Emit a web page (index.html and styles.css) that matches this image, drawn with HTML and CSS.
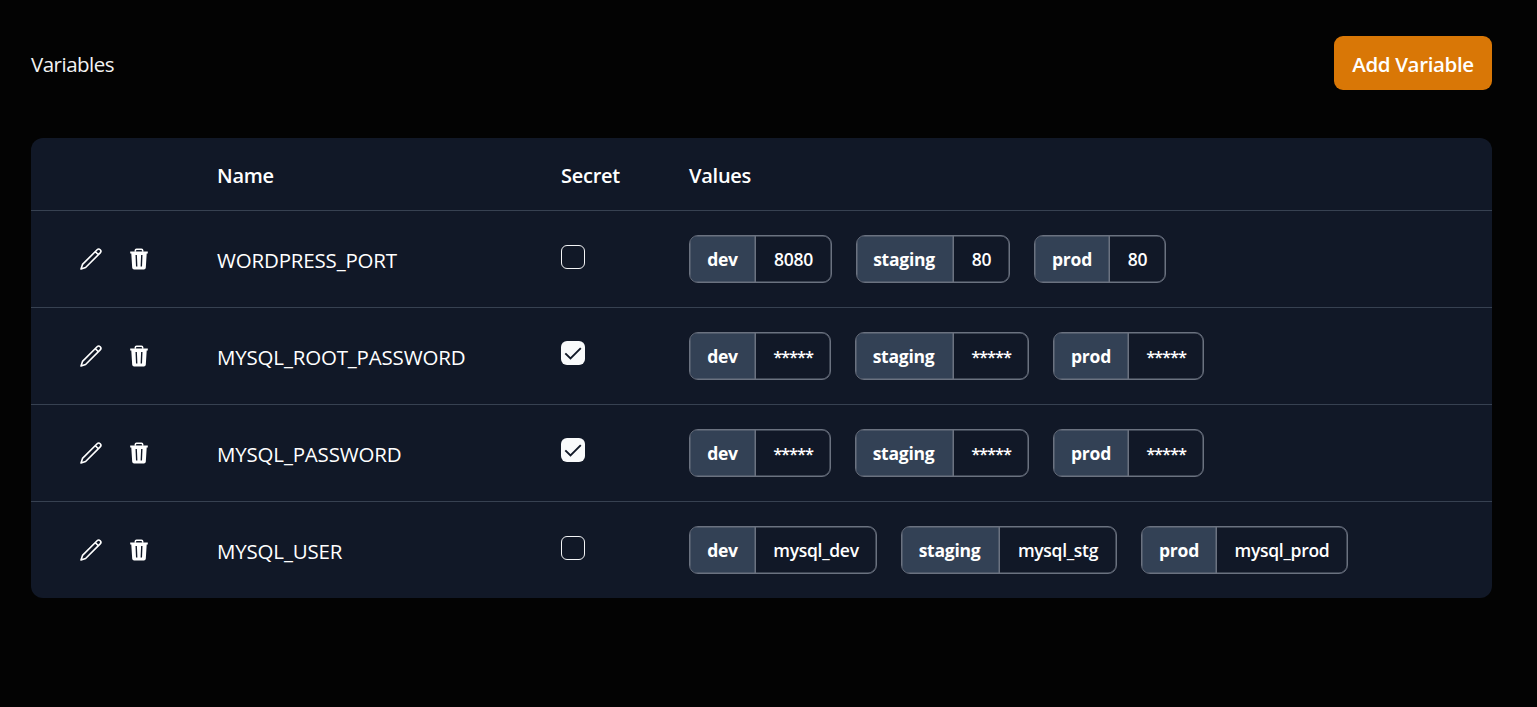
FILE: index.html
```html
<!DOCTYPE html>
<html lang="en">
<head>
<meta charset="utf-8">
<title>Variables</title>
<link rel="stylesheet" href="styles.css">
</head>
<body>
<svg width="0" height="0" class="sprite">
  <symbol id="pencil" viewBox="0 0 24 24"><path d="M2 22l1.5-4.6L18.1 2.8a2 2 0 0 1 3.1 3.1L6.6 20.5zM16.3 4.6l3.1 3.1" fill="none" stroke="currentColor" stroke-width="1.6" stroke-linejoin="round"/></symbol>
  <symbol id="trash" viewBox="0 0 24 24"><path d="M8.3 4.8V3.4q0-1.2 1.2-1.2h5q1.2 0 1.2 1.2v1.4" fill="none" stroke="currentColor" stroke-width="1.5"/><path fill="currentColor" fill-rule="evenodd" d="M3.2 4.4h17.6v2.1h-1.1l-.9 14.3q-.2 1.7-1.9 1.7H7.1q-1.7 0-1.9-1.7L4.3 6.5H3.2zM8.5 8l.5 11.5h1.4L9.9 8zm5.6 0-.5 11.5h1.4L15.5 8z"/></symbol>
  <symbol id="check" viewBox="0 0 24 24"><path d="M4.3 12.3l5.2 5.2L19.8 7.2" fill="none" stroke="#111827" stroke-width="1.9"/></symbol>
</svg>
<header class="topbar">
  <h1 class="title">Variables</h1>
  <button class="add">Add Variable</button>
</header>
<main class="table">
  <div class="row head"><span></span><span>Name</span><span>Secret</span><span>Values</span></div>
  <div class="row">
    <div class="actions"><svg><use href="#pencil"/></svg><svg><use href="#trash"/></svg></div>
    <span class="name">WORDPRESS_PORT</span>
    <span class="box"></span>
    <div class="values">
      <div class="pill"><b class="dev">dev</b><span class="v-port">8080</span></div>
      <div class="pill"><b class="staging">staging</b><span class="v-short">80</span></div>
      <div class="pill"><b class="prod">prod</b><span class="v-short">80</span></div>
    </div>
  </div>
  <div class="row">
    <div class="actions"><svg><use href="#pencil"/></svg><svg><use href="#trash"/></svg></div>
    <span class="name">MYSQL_ROOT_PASSWORD</span>
    <span class="box checked"><svg><use href="#check"/></svg></span>
    <div class="values">
      <div class="pill"><b class="dev">dev</b><span class="v-mask">*****</span></div>
      <div class="pill"><b class="staging">staging</b><span class="v-mask">*****</span></div>
      <div class="pill"><b class="prod">prod</b><span class="v-mask">*****</span></div>
    </div>
  </div>
  <div class="row">
    <div class="actions"><svg><use href="#pencil"/></svg><svg><use href="#trash"/></svg></div>
    <span class="name">MYSQL_PASSWORD</span>
    <span class="box checked"><svg><use href="#check"/></svg></span>
    <div class="values">
      <div class="pill"><b class="dev">dev</b><span class="v-mask">*****</span></div>
      <div class="pill"><b class="staging">staging</b><span class="v-mask">*****</span></div>
      <div class="pill"><b class="prod">prod</b><span class="v-mask">*****</span></div>
    </div>
  </div>
  <div class="row">
    <div class="actions"><svg><use href="#pencil"/></svg><svg><use href="#trash"/></svg></div>
    <span class="name">MYSQL_USER</span>
    <span class="box"></span>
    <div class="values">
      <div class="pill"><b class="dev">dev</b><span class="v-dev">mysql_dev</span></div>
      <div class="pill"><b class="staging">staging</b><span class="v-stg">mysql_stg</span></div>
      <div class="pill"><b class="prod">prod</b><span class="v-prod">mysql_prod</span></div>
    </div>
  </div>
</main>
</body>
</html>
```
FILE: styles.css
```css
* { box-sizing: border-box; }
body { margin: 0; height: 707px; padding: 36px 45px 0 31px; background: #030303; color: #fff; font-family: "Open Sans", "Noto Sans", sans-serif; overflow: hidden; }
.sprite { display: block; }
.topbar { display: flex; justify-content: space-between; height: 54px; }
.title { margin: 0; font-size: 20.5px; font-weight: 400; line-height: 57px; letter-spacing: -.5px; color: #f3f3f3; }
.add { width: 158px; height: 54px; padding: 2px 0 0; border: 0; border-radius: 9px; background: #d97706; color: #fff; font: 600 20.5px "Open Sans", sans-serif; letter-spacing: -.35px; white-space: nowrap; }
.table { margin-top: 48px; height: 460px; border-radius: 12px; background: #111827; overflow: hidden; }
.row { display: grid; grid-template-columns: 186px 344px 128px 1fr; align-items: center; height: 97px; border-bottom: 1px solid #374151; }
.row:last-child { border-bottom-color: #151e2e; }
.head { height: 73px; padding-top: 2px; font-size: 20px; font-weight: 600; letter-spacing: -.25px; }
.actions { display: flex; gap: 24px; padding-left: 48px; }
.actions svg { width: 24px; height: 24px; }
.name { padding-top: 2px; font-size: 20.5px; letter-spacing: -.18px; white-space: nowrap; }
.box { width: 24px; height: 24px; margin-top: -4px; border: 1.5px solid #f3f4f6; border-radius: 6px; }
.checked { margin-top: -6px; background: #f9fafb; border: 0; }
.checked svg { display: block; width: 24px; height: 24px; }
.values { display: flex; gap: 24px; }
.pill { display: flex; height: 48px; border: 1px solid #6b7280; border-radius: 9px; overflow: hidden; font-size: 17.5px; line-height: 47px; text-align: center; white-space: nowrap; box-shadow: inset 0 0 0 .5px #6b7280; }
.pill b { background: #334155; border-right: 1px solid #6b7280; box-shadow: inset 0 0 0 .5px #6b7280; font-weight: 700; letter-spacing: -.25px; }
.pill span { font-weight: 600; letter-spacing: -.3px; }
.dev { width: 66px; }
.staging { width: 98px; padding-right: 2px; }
.prod { width: 75px; }
.v-port { width: 75px; }
.v-short { width: 55px; }
.pill:has(.v-short) .staging { width: 97px; }
.pill .v-mask { width: 74px; font-size: 16.5px; letter-spacing: -1.1px; }
.v-dev { width: 120px; }
.v-stg { width: 116px; }
.v-prod { width: 130px; }
```
